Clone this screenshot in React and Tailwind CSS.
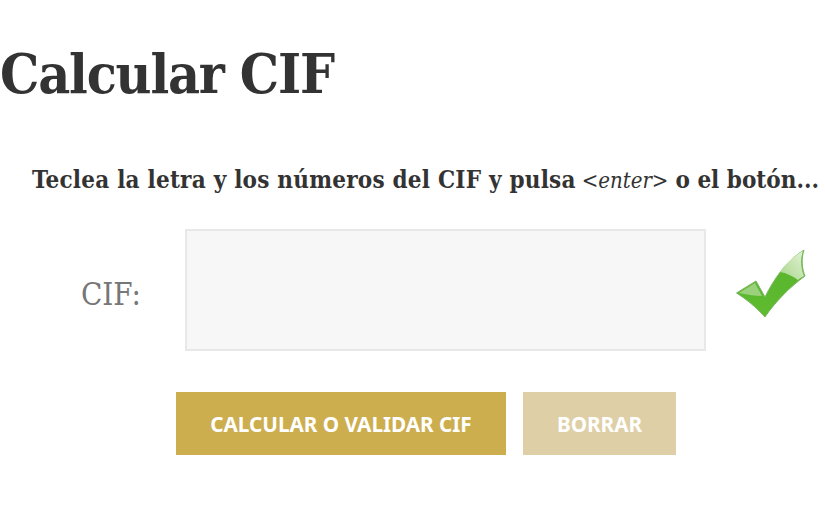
export default function App() {
  return (
    <div className="w-[825px] h-[510px] overflow-hidden bg-white text-[#333] font-['DejaVu_Serif_Condensed','DejaVu_Serif',serif]">
      <h1 className="pt-[42px] text-[55px] leading-[64px] font-bold tracking-[-1.2px] whitespace-nowrap">Calcular CIF</h1>
      <p className="mt-[58px] ml-[32px] text-[24px] leading-[32px] font-bold whitespace-nowrap">
        <span className="tracking-[0.22px]">Teclea la letra y los números del CIF y pulsa</span>
        <em className="ml-[6px] font-normal text-[22px]">&lt;enter&gt;</em>
        <span className="ml-[7px]">o el botón...</span>
      </p>
      <div className="mt-[32px] flex items-center">
        <label className="w-[185px] pl-[81px] pt-[8px] text-[31px] text-[#777]">CIF:</label>
        <input aria-label="CIF" className="w-[521px] h-[122px] bg-[#f7f7f7] border-2 border-[#e8e8e8] outline-none" />
        <svg className="ml-[30px] mb-[12px]" width="72" height="70" viewBox="0 0 72 70">
          <defs>
            <linearGradient id="g" x1="0" y1="0" x2="0" y2="1">
              <stop offset="0" stopColor="#56b32c" />
              <stop offset="1" stopColor="#5fbc30" />
            </linearGradient>
            <linearGradient id="h" x1="0" y1="1" x2="1" y2="0">
              <stop offset="0" stopColor="#a8d68a" />
              <stop offset="1" stopColor="#e2f2d6" />
            </linearGradient>
          </defs>
          <path d="M0.5 44 L20 32 L29 48 C38 30 50 12 68 1 C65 10 66 20 69 27 C54 38 40 52 29 68 C20 58 10 50 0.5 44 Z" fill="url(#g)" stroke="#7fb565" strokeWidth="1" />
          <path d="M44 23 C50 14 58 7 67 2 C64 10 65 20 68 27 C66 28 64 29 62 31 C57 27 50 24 44 23 Z" fill="url(#h)" />
          <path d="M3 44 L19 34 L26 47 C20 47 12 46 3 44 Z" fill="#9bd07c" />
        </svg>
      </div>
      <div className="mt-[41px] ml-[176px] flex gap-[17px] font-['Noto_Sans',sans-serif] font-bold text-white text-[20.7px]">
        <button className="w-[330px] h-[63px] pt-[3px] bg-[#cdae4f]">CALCULAR O VALIDAR CIF</button>
        <button className="w-[153px] h-[63px] pt-[3px] bg-[#decfa7]">BORRAR</button>
      </div>
    </div>
  );
}
